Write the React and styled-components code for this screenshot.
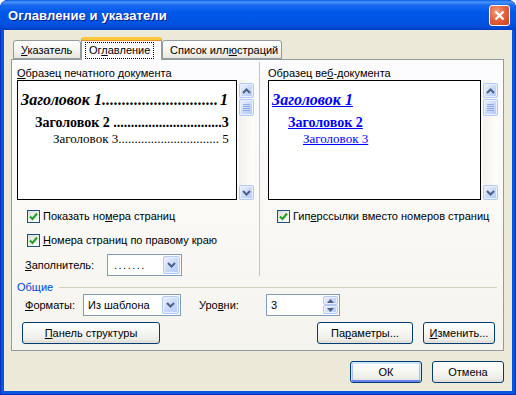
import React from "react";
import styled, { createGlobalStyle } from "styled-components";

const GlobalStyle = createGlobalStyle`
  html, body { margin: 0; padding: 0; background: #fff; }
  body {
    font-family: "Liberation Sans", Arial, sans-serif;
    font-size: 11px;
    color: #000;
  }
  * { box-sizing: border-box; }
`;

const UI_FONT = `"Liberation Sans", Arial, sans-serif`;
const SERIF = `"Liberation Serif", "Times New Roman", serif`;

const Window = styled.div`
  width: 516px;
  height: 395px;
  display: flex;
  flex-direction: column;
  background: #0855e0;
  border-radius: 8px 8px 0 0;
  box-shadow: inset 0 0 0 1px #0a2fc4;
  overflow: hidden;
`;

const TitleBar = styled.div`
  height: 30px;
  flex: none;
  display: flex;
  align-items: center;
  padding: 0 6px 0 8px;
  background: linear-gradient(
    180deg,
    #0a5ee8 0%,
    #4a93fa 7%,
    #1a6af0 17%,
    #0058ea 40%,
    #0054e3 75%,
    #0048d6 92%,
    #003dbf 100%
  );
  border-radius: 8px 8px 0 0;
`;

const Title = styled.div`
  flex: 1;
  color: #fff;
  font: bold 13px ${UI_FONT};
  text-shadow: 1px 1px 0 #0a1d88;
  letter-spacing: 0.1px;
`;

const CloseButton = styled.div`
  width: 21px;
  height: 21px;
  border: 1px solid #fff;
  border-radius: 3px;
  background: radial-gradient(circle at 35% 30%, #f2a087 0%, #e2653f 45%, #cc3f16 100%);
  display: flex;
  align-items: center;
  justify-content: center;
`;

const Body = styled.div`
  flex: 1;
  margin: 0 4px 4px 4px;
  background: #ece9d8;
  padding: 7px 8px 0 7px;
  display: flex;
  flex-direction: column;
`;

const Tabs = styled.div`
  height: 22px;
  display: flex;
  align-items: flex-end;
  padding-left: 2px;
`;

const Tab = styled.div`
  position: relative;
  z-index: ${(p) => (p.$active ? 2 : 1)};
  width: ${(p) => p.$w}px;
  height: ${(p) => (p.$active ? 23 : 19)}px;
  margin-bottom: ${(p) => (p.$active ? -1 : 0)}px;
  display: flex;
  align-items: center;
  padding-left: ${(p) => (p.$active ? 4 : 7)}px;
  padding-top: ${(p) => (p.$active ? 1 : 0)}px;
  border: 1px solid #919b9c;
  border-bottom: ${(p) => (p.$active ? "none" : "1px solid #919b9c")};
  border-top: ${(p) => (p.$active ? "3px solid #ffc83c" : "1px solid #919b9c")};
  border-radius: 3px 3px 0 0;
  background: ${(p) =>
    p.$active ? "#fcfcfe" : "linear-gradient(180deg, #ffffff 0%, #f4f3ee 60%, #e8e6dd 100%)"};
  box-shadow: ${(p) => (p.$active ? "inset 0 1px 0 #e68b2c" : "none")};
  white-space: nowrap;
`;

const Focus = styled.span`
  outline: 1px dotted #000;
  outline-offset: 0;
  padding: 1px 3px;
  line-height: 13px;
`;

const Panel = styled.div`
  border: 1px solid #919b9c;
  background: linear-gradient(180deg, #fcfcfe 0%, #f9f8f4 60%, #f4f3ee 100%);
  padding: 0 6px 6px 5px;
`;

const TopArea = styled.div`
  margin-top: 2px;
  display: grid;
  grid-template-columns: 242px 1fr;
`;

const Column = styled.div`
  padding-top: 4px;
  padding-left: ${(p) => (p.$right ? 8 : 0)}px;
  border-left: ${(p) => (p.$right ? "1px solid #c9c6b6" : "none")};
`;

const Label = styled.div`
  line-height: 14px;
  height: 14px;
  white-space: nowrap;
`;

const PreviewRow = styled.div`
  display: flex;
  gap: 2px;
  height: 120px;
`;

const PreviewBox = styled.div`
  width: ${(p) => p.$w}px;
  border: 1px solid #000;
  background: #fff;
  padding: 9px 8px 0 3px;
  overflow: hidden;
`;

const levelStyles = {
  1: { size: 16, lh: 19, weight: "bold", style: "italic", indent: 0, mt: 0 },
  2: { size: 14, lh: 17, weight: "bold", style: "normal", indent: 14, mt: 5 },
  3: { size: 13, lh: 16, weight: "normal", style: "normal", indent: 32, mt: 0 },
};

const TocLine = styled.div`
  display: flex;
  white-space: nowrap;
  font-family: ${SERIF};
  font-size: ${(p) => levelStyles[p.$level].size}px;
  line-height: ${(p) => levelStyles[p.$level].lh}px;
  font-weight: ${(p) => levelStyles[p.$level].weight};
  font-style: ${(p) => levelStyles[p.$level].style};
  padding-left: ${(p) => levelStyles[p.$level].indent}px;
  margin-top: ${(p) => levelStyles[p.$level].mt}px;
`;

const PageNum = styled.span`
  margin-left: auto;
`;

const WebLine = styled.div`
  font-family: ${SERIF};
  color: #0000ff;
  text-decoration: underline;
  white-space: nowrap;
  font-size: ${(p) => levelStyles[p.$level].size}px;
  line-height: ${(p) => levelStyles[p.$level].lh}px;
  font-weight: ${(p) => levelStyles[p.$level].weight};
  font-style: ${(p) => levelStyles[p.$level].style};
  padding-left: ${(p) => [0, 0, 16, 31][p.$level]}px;
  margin-top: ${(p) => levelStyles[p.$level].mt}px;
`;

const ScrollTrack = styled.div`
  width: 15px;
  display: flex;
  flex-direction: column;
  padding-top: 3px;
  background: linear-gradient(90deg, #f3f1ec 0%, #fefefb 100%);
`;

const ScrollButton = styled.div`
  width: 15px;
  height: ${(p) => p.$h || 15}px;
  margin-bottom: ${(p) => (p.$gap ? 1 : 0)}px;
  border: 1px solid #b4c8f6;
  border-radius: 2px;
  background: linear-gradient(135deg, #eef3fe 0%, #c8d8fb 55%, #b4c9f6 100%);
  box-shadow: inset 0 0 0 1px #eaf0fd;
  display: flex;
  align-items: center;
  justify-content: center;
`;

const Spacer = styled.div`
  flex: 1;
`;

const CheckRow = styled.div`
  display: flex;
  align-items: center;
  height: 16px;
  margin-top: 8px;
  padding-left: ${(p) => p.$indent}px;
  gap: 3px;
  white-space: nowrap;
`;

const Box = styled.div`
  width: 13px;
  height: 13px;
  border: 1px solid #1c5180;
  background: linear-gradient(135deg, #dcdcd7 0%, #f5f5f2 70%, #ffffff 100%);
  display: flex;
  align-items: center;
  justify-content: center;
`;

const FieldRow = styled.div`
  display: flex;
  align-items: center;
  height: 22px;
  margin-top: ${(p) => p.$mt || 0}px;
  padding-left: 8px;
  white-space: nowrap;
`;

const FieldLabel = styled.span`
  width: ${(p) => p.$w}px;
  margin-left: ${(p) => p.$ml || 0}px;
`;

const Combo = styled.div`
  width: ${(p) => p.$w}px;
  height: ${(p) => p.$h || 22}px;
  border: 1px solid #7f9db9;
  background: #fff;
  display: flex;
  align-items: center;
  padding: 1px;
`;

const ComboText = styled.span`
  flex: 1;
  padding-left: ${(p) => p.$pl || 3}px;
  letter-spacing: ${(p) => (p.$dots ? "1.5px" : "0")};
`;

const DropButton = styled(ScrollButton)`
  width: 17px;
  height: 100%;
`;

const SpinColumn = styled.div`
  width: 15px;
  height: 100%;
  display: flex;
  flex-direction: column;
`;

const SpinHalf = styled(ScrollButton)`
  height: 50%;
`;

const GroupHeader = styled.div`
  margin-top: 4px;
  height: 14px;
  line-height: 14px;
  display: flex;
  align-items: center;
  color: #0046d5;
`;

const GroupLine = styled.div`
  flex: 1;
  height: 1px;
  margin-left: 6px;
  background: #d0d0bf;
`;

const ButtonRow = styled.div`
  display: flex;
  align-items: center;
  gap: 10px;
  margin-top: 6px;
  padding: 0 2px 0 5px;
`;

const Button = styled.button`
  width: ${(p) => p.$w}px;
  height: 22px;
  padding: 0;
  border: 1px solid #003c74;
  border-radius: 3px;
  font: 11px ${UI_FONT};
  color: #000;
  background: linear-gradient(180deg, #ffffff 0%, #f6f6f3 45%, #ecebe6 85%, #d6d0c5 100%);
  box-shadow: ${(p) =>
    p.$default
      ? "inset 0 1px 0 1px #cee7ff, inset 0 -1px 0 1px #6982ee, inset 1px 0 0 1px #a9c4f5, inset -1px 0 0 1px #a9c4f5"
      : "inset 0 -1px 0 #e3e2da"};
`;

const Footer = styled.div`
  display: flex;
  justify-content: flex-end;
  gap: 10px;
  margin-top: 10px;
`;

const Chevron = ({ up }) => (
  <svg width="9" height="6" viewBox="0 0 9 6">
    <polyline
      points={up ? "1,5 4.5,1.5 8,5" : "1,1 4.5,4.5 8,1"}
      fill="none"
      stroke="#4d6185"
      strokeWidth="2"
    />
  </svg>
);

const SmallArrow = ({ up }) => (
  <svg width="7" height="4" viewBox="0 0 7 4">
    <polygon points={up ? "0,4 3.5,0 7,4" : "0,0 3.5,4 7,0"} fill="#4d6185" />
  </svg>
);

const Grip = () => (
  <svg width="7" height="8" viewBox="0 0 7 8">
    {[0.5, 2.5, 4.5, 6.5].map((y) => (
      <line key={y} x1="0" x2="7" y1={y} y2={y} stroke="#8ea9e6" strokeWidth="1" />
    ))}
  </svg>
);

const Scrollbar = () => (
  <ScrollTrack>
    <ScrollButton $gap>
      <Chevron up />
    </ScrollButton>
    <ScrollButton $h={17}>
      <Grip />
    </ScrollButton>
    <Spacer />
    <ScrollButton>
      <Chevron />
    </ScrollButton>
  </ScrollTrack>
);

const Check = () => (
  <Box>
    <svg width="9" height="9" viewBox="0 0 9 9">
      <polyline points="1,4.5 3.5,7 8,1.5" fill="none" stroke="#21a121" strokeWidth="2" />
    </svg>
  </Box>
);

const tocEntries = [
  { level: 1, title: "Заголовок 1", dots: 29, page: "1" },
  { level: 2, title: "Заголовок 2 ", dots: 31, page: "3" },
  { level: 3, title: "Заголовок 3", dots: 31, page: "\u00a05" },
];

export default function App() {
  return (
    <>
      <GlobalStyle />
      <Window>
        <TitleBar>
          <Title>Оглавление и указатели</Title>
          <CloseButton>
            <svg width="11" height="11" viewBox="0 0 11 11">
              <path d="M1.5 1.5 L9.5 9.5 M9.5 1.5 L1.5 9.5" stroke="#fff" strokeWidth="2.2" />
            </svg>
          </CloseButton>
        </TitleBar>
        <Body>
          <Tabs>
            <Tab $w={68}>
              <span>
                <u>У</u>казатель
              </span>
            </Tab>
            <Tab $w={81} $active>
              <Focus>
                Ог<u>л</u>авление
              </Focus>
            </Tab>
            <Tab $w={120}>
              <span>
                Список илл<u>ю</u>страций
              </span>
            </Tab>
          </Tabs>
          <Panel>
            <TopArea>
              <Column>
                <Label>
                  <u>О</u>бразец печатного документа
                </Label>
                <PreviewRow>
                  <PreviewBox $w={220}>
                    {tocEntries.map((e) => (
                      <TocLine key={e.level} $level={e.level}>
                        <span>
                          {e.title.replace(" ", "\u00a0")}
                          {".".repeat(e.dots)}
                        </span>
                        <PageNum>{e.page}</PageNum>
                      </TocLine>
                    ))}
                  </PreviewBox>
                  <Scrollbar />
                </PreviewRow>
                <CheckRow $indent={10}>
                  <Check />
                  <span>
                    Показать но<u>м</u>ера страниц
                  </span>
                </CheckRow>
                <CheckRow $indent={10}>
                  <Check />
                  <span>
                    <u>Н</u>омера страниц по правому краю
                  </span>
                </CheckRow>
                <FieldRow $mt={6}>
                  <FieldLabel $w={82}>
                    <u>З</u>аполнитель:
                  </FieldLabel>
                  <Combo $w={75}>
                    <ComboText $dots $pl={5}>.......</ComboText>
                    <DropButton>
                      <Chevron />
                    </DropButton>
                  </Combo>
                </FieldRow>
              </Column>
              <Column $right>
                <Label>
                  Образец ве<u>б</u>-документа
                </Label>
                <PreviewRow>
                  <PreviewBox $w={213}>
                    <WebLine $level={1}>Заголовок 1</WebLine>
                    <WebLine $level={2}>Заголовок 2</WebLine>
                    <WebLine $level={3}>Заголовок 3</WebLine>
                  </PreviewBox>
                  <Scrollbar />
                </PreviewRow>
                <CheckRow $indent={9}>
                  <Check />
                  <span>
                    Гип<u>е</u>рссылки вместо номеров страниц
                  </span>
                </CheckRow>
              </Column>
            </TopArea>
            <GroupHeader>
              <span>Общие</span>
              <GroupLine />
            </GroupHeader>
            <FieldRow>
              <FieldLabel $w={58}>
                <u>Ф</u>орматы:
              </FieldLabel>
              <Combo $w={98}>
                <ComboText>Из шаблона</ComboText>
                <DropButton>
                  <Chevron />
                </DropButton>
              </Combo>
              <FieldLabel $w={67} $ml={18}>
                Уро<u>в</u>ни:
              </FieldLabel>
              <Combo $w={74}>
                <ComboText>3</ComboText>
                <SpinColumn>
                  <SpinHalf>
                    <SmallArrow up />
                  </SpinHalf>
                  <SpinHalf>
                    <SmallArrow />
                  </SpinHalf>
                </SpinColumn>
              </Combo>
            </FieldRow>
            <ButtonRow>
              <Button $w={138}>
                <u>П</u>анель структуры
              </Button>
              <Spacer />
              <Button $w={96}>
                Па<u>р</u>аметры...
              </Button>
              <Button $w={72}>
                <u>И</u>зменить...
              </Button>
            </ButtonRow>
          </Panel>
          <Footer>
            <Button $w={72} $default>
              ОК
            </Button>
            <Button $w={72}>Отмена</Button>
          </Footer>
        </Body>
      </Window>
    </>
  );
}
